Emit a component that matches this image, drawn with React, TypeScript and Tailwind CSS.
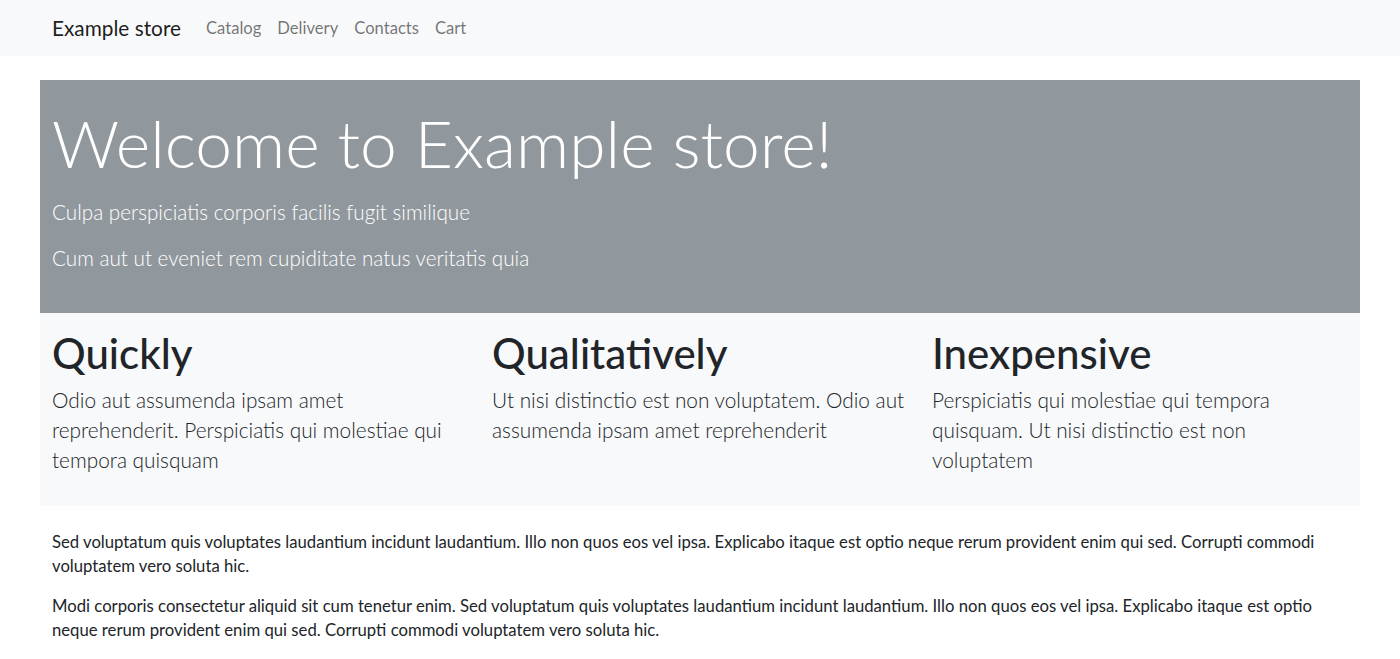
const features = [
  {
    title: 'Quickly',
    text: 'Odio aut assumenda ipsam amet reprehenderit. Perspiciatis qui molestiae qui tempora quisquam',
  },
  {
    title: 'Qualitatively',
    text: 'Ut nisi distinctio est non voluptatem. Odio aut assumenda ipsam amet reprehenderit',
  },
  {
    title: 'Inexpensive',
    text: 'Perspiciatis qui molestiae qui tempora quisquam. Ut nisi distinctio est non voluptatem',
  },
];

export default function App() {
  return (
    <div className="min-h-screen bg-white text-[#212529] font-['Lato','Open_Sans',sans-serif]">
      {/* navbar */}
      <nav className="bg-[#f8f9fa] h-14">
        <div className="w-[1320px] mx-auto px-3 h-full flex items-center">
          <span className="text-[20.8px] text-black/90 mr-[25px]">Example store</span>
          <div className="flex items-center gap-4 text-[16.6px] text-black/55">
            <span>Catalog</span>
            <span>Delivery</span>
            <span>Contacts</span>
            <span>Cart</span>
          </div>
        </div>
      </nav>

      <div className="w-[1320px] mx-auto mt-6">
        {/* jumbotron */}
        <div className="bg-[#91989d] text-white px-3 py-6">
          <h1 className="text-[66px] leading-[77px] font-light mb-4">Welcome to Example store!</h1>
          <p className="text-[20.7px] font-light leading-[30px] mb-4">Culpa perspiciatis corporis facilis fugit similique</p>
          <p className="text-[20.7px] font-light leading-[30px] mb-4">Cum aut ut eveniet rem cupiditate natus veritatis quia</p>
        </div>

        {/* features */}
        <div className="bg-[#f8f9fa] grid grid-cols-3 pt-4 pb-[31px]">
          {features.map((f) => (
            <div key={f.title} className="px-3">
              <h2 className="text-[42px] leading-[48px] font-medium mb-2">{f.title}</h2>
              <p className="text-[20.8px] font-light leading-[30px]">{f.text}</p>
            </div>
          ))}
        </div>

        {/* text */}
        <div className="px-3 pt-6 text-[16.7px] leading-6">
          <p className="mb-4">
            Sed voluptatum quis voluptates laudantium incidunt laudantium. Illo non quos eos vel ipsa. Explicabo itaque est optio neque rerum provident enim qui sed. Corrupti commodi voluptatem vero soluta hic.
          </p>
          <p>
            Modi corporis consectetur aliquid sit cum tenetur enim. Sed voluptatum quis voluptates laudantium incidunt laudantium. Illo non quos eos vel ipsa. Explicabo itaque est optio neque rerum provident enim qui sed. Corrupti commodi voluptatem vero soluta hic.
          </p>
        </div>
      </div>
    </div>
  );
}
